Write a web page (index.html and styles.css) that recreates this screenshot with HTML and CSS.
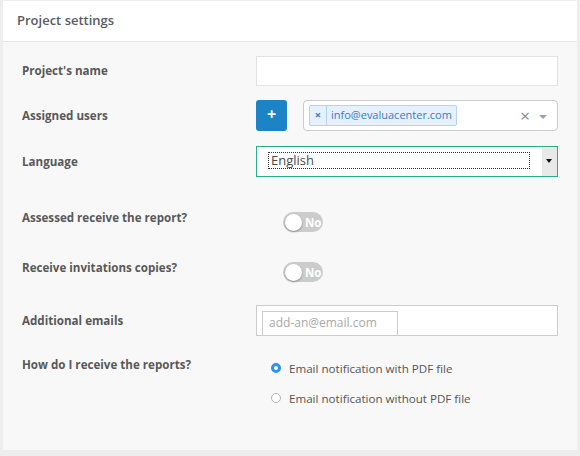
FILE: index.html
```html
<!DOCTYPE html>
<html lang="en">
<head>
    <meta charset="UTF-8">
    <meta name="viewport" content="width=device-width, initial-scale=1.0">
    <title>Project settings</title>
    <link rel="stylesheet" href="styles.css">
</head>
<body>
    <div class="panel">
        <div class="panel-heading">Project settings</div>
        <div class="panel-body">
            <div class="row row-input">
                <label class="row-label">Project's name</label>
                <div class="text-box"></div>
            </div>
            <div class="row row-users">
                <label class="row-label">Assigned users</label>
                <div class="users">
                    <span class="add-btn">+</span>
                    <div class="multi-select">
                        <span class="tag"><span class="tag-remove">×</span><span class="tag-text">info@evaluacenter.com</span></span>
                        <span class="clear">×</span>
                        <span class="caret"></span>
                    </div>
                </div>
            </div>
            <div class="row row-lang">
                <label class="row-label">Language</label>
                <div class="lang-select">
                    <span class="lang-value">English</span>
                    <span class="lang-btn"><span class="lang-arrow"></span></span>
                </div>
            </div>
            <div class="row row-switch">
                <label class="row-label">Assessed receive the report?</label>
                <div class="switch-wrap"><span class="switch"><span class="knob"></span>No</span></div>
            </div>
            <div class="row row-switch last-switch">
                <label class="row-label">Receive invitations copies?</label>
                <div class="switch-wrap"><span class="switch"><span class="knob"></span>No</span></div>
            </div>
            <div class="row row-emails">
                <label class="row-label">Additional emails</label>
                <div class="emails-box">
                    <span class="email-input">add-an@email.com</span>
                </div>
            </div>
            <div class="row row-reports">
                <label class="row-label">How do I receive the reports?</label>
                <div class="radios">
                    <div class="radio"><span class="dot checked"></span>Email notification with PDF file</div>
                    <div class="radio"><span class="dot"></span>Email notification without PDF file</div>
                </div>
            </div>
        </div>
    </div>
</body>
</html>
```

FILE: styles.css
```css
body {
  margin: 0;
  background-color: #eeeeee;
  font-family: "Open Sans", "Liberation Sans", sans-serif;
  color: #555;
}

/* Panel */
.panel {
  margin: 1px 3px 0;
  background-color: #f8f8f8;
}

.panel-heading {
  height: 40px;
  line-height: 38px;
  padding-left: 14px;
  background-color: #fff;
  border-bottom: 1px solid #e4e4e4;
  font-size: 13px;
  font-weight: 600;
  color: #575c63;
}

.panel-body {
  padding: 14px 19px 32px 19px;
}

/* Rows */
.row {
  display: grid;
  grid-template-columns: 234px 302px;
  align-items: center;
}

.row-label {
  font-size: 11.6px;
  font-weight: 700;
  color: #595959;
  line-height: 20px;
}

.row-input {
  margin-bottom: 14px;
}

.text-box {
  height: 28px;
  background-color: #fff;
  border: 1px solid #e3e3e3;
}

/* Assigned users */
.row-users {
  margin-bottom: 15px;
}

.users {
  display: flex;
  gap: 16px;
}

.add-btn {
  width: 31px;
  height: 31px;
  line-height: 29px;
  text-align: center;
  background-color: #1c83c6;
  color: #fff;
  font-size: 16px;
  font-weight: 700;
  border-radius: 3px;
}

.multi-select {
  flex: 1;
  height: 29px;
  display: flex;
  align-items: center;
  padding-left: 5px;
  background-color: #fff;
  border: 1px solid #cbcbcb;
  border-radius: 4px;
}

.tag {
  display: flex;
  height: 19px;
  line-height: 18px;
  background-color: #e6f1fd;
  border: 1px solid #b4d3f4;
  border-radius: 2px;
  font-size: 11px;
  color: #3a7bc8;
}

.tag-remove {
  width: 16px;
  text-align: center;
  font-size: 11px;
  font-weight: 700;
  border-right: 1px solid #b4d3f4;
}

.tag-text {
  padding: 0 4px 0 4px;
}

.clear {
  margin-left: auto;
  color: #888;
  font-size: 17px;
  line-height: 20px;
}

.caret {
  margin: 2px 10px 0 9px;
  border-left: 4px solid transparent;
  border-right: 4px solid transparent;
  border-top: 4px solid #a0a0a0;
}

/* Language */
.row-lang {
  margin-bottom: 31px;
}

.lang-select {
  position: relative;
  height: 29px;
  background-color: #fff;
  border: 1px solid #27ae8e;
}

.lang-value {
  position: absolute;
  left: 11px;
  top: 5px;
  width: 258px;
  height: 15px;
  line-height: 15px;
  padding-left: 2px;
  border: 1px dotted #333;
  font-size: 13px;
  color: #4a4a4a;
}

.lang-btn {
  position: absolute;
  right: 0;
  top: 0;
  width: 15px;
  height: 29px;
  background-color: #e9e9e9;
}

.lang-arrow {
  position: absolute;
  left: 4px;
  top: 12px;
  border-left: 3px solid transparent;
  border-right: 3px solid transparent;
  border-top: 4px solid #111;
}

/* Switches */
.row-switch {
  align-items: start;
  margin-bottom: 26px;
}

.last-switch {
  margin-bottom: 23px;
}

.switch-wrap {
  display: flex;
  padding: 4px 0 0 27px;
}

.switch {
  display: flex;
  align-items: center;
  width: 40px;
  height: 20px;
  border-radius: 10px;
  background-color: #cccccc;
  color: #fff;
  font-size: 11.5px;
  font-weight: 700;
  box-sizing: border-box;
  padding-left: 2px;
}

.knob {
  width: 17px;
  height: 17px;
  margin-right: 3px;
  border-radius: 50%;
  background-color: #fff;
  box-shadow: 0 1px 2px rgba(0, 0, 0, 0.35);
}

/* Additional emails */
.row-emails {
  margin-bottom: 19px;
}

.emails-box {
  height: 31px;
  box-sizing: border-box;
  padding: 5px 0 0 5px;
  background-color: #fff;
  border: 1px solid #cccccc;
}

.email-input {
  display: block;
  width: 128px;
  height: 24px;
  line-height: 22px;
  padding-left: 6px;
  border: 1px solid #cccccc;
  border-bottom: none;
  font-size: 12px;
  color: #a9a9a9;
}

/* Report radios */
.row-reports {
  align-items: start;
}

.radios {
  padding: 3px 0 0 15px;
}

.radio {
  display: flex;
  align-items: center;
  height: 20px;
  margin-bottom: 10px;
  font-size: 11.6px;
  color: #555;
}

.dot {
  width: 8px;
  height: 8px;
  margin-right: 8px;
  border-radius: 50%;
  border: 1px solid #b3b3b3;
  background-color: #fff;
}

.dot.checked {
  width: 4px;
  height: 4px;
  border: 3px solid #2f8ff2;
  background-color: #fff;
}
```
